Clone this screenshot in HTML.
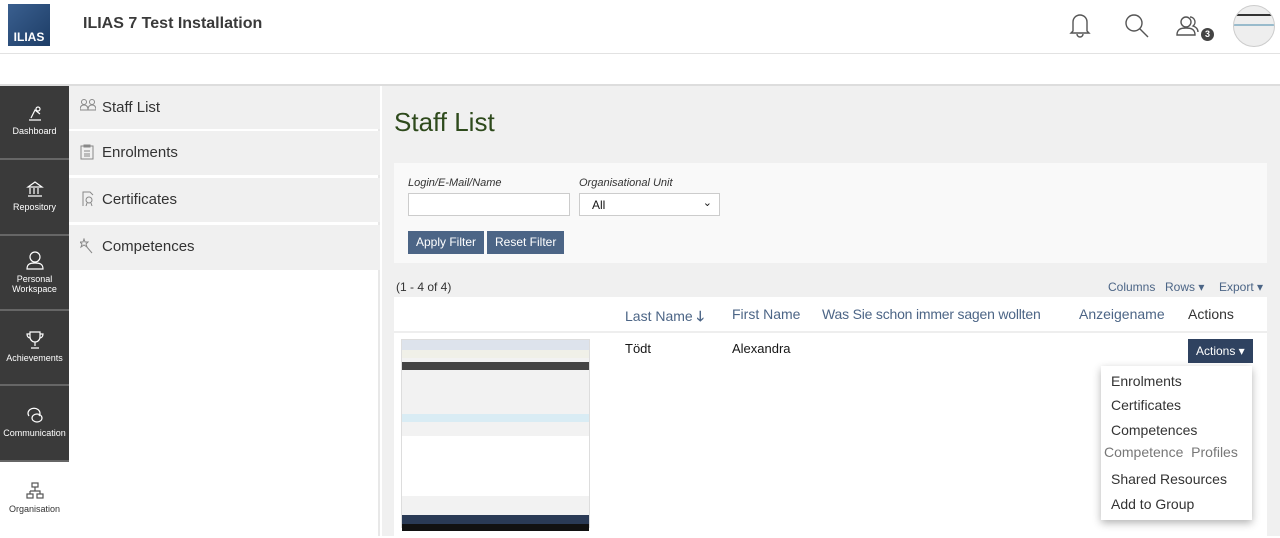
<!DOCTYPE html>
<html><head><meta charset="utf-8"><style>
*{box-sizing:border-box;margin:0;padding:0}
body{width:1280px;height:536px;overflow:hidden;font-family:"Liberation Sans",sans-serif;background:#fff;position:relative;color:#161616}
.abs{position:absolute}
.hdr{left:0;top:0;width:1280px;height:54px;border-bottom:1px solid #e2e2e2;background:#fff}
.logo{left:8px;top:4px;width:42px;height:42px;background:linear-gradient(135deg,#3a5f8f,#1d3d66);color:#fff;font-weight:bold;font-size:12px;padding-top:26px;text-align:center}
.title{left:83px;top:15px;font-size:16px;font-weight:bold;color:#3a3a3a}
.strip{left:0;top:84px;width:1280px;height:2px;background:#ddd}
.mb{left:0;top:86px;width:69px;height:450px;background:#3a3a3a}
.mi{position:absolute;left:0;width:69px;color:#fff;font-size:9px;text-align:center;border-bottom:2px solid #666}
.mi svg{display:block;margin:0 auto 4px}
.slate{left:69px;top:86px;width:311px;height:450px;background:#fff;border-right:2px solid #e8e8e8}
.si{position:absolute;left:0;width:311px;height:43px;background:#f0f0f0;font-size:15px;color:#333;padding:13px 0 0 33px}
.si svg{position:absolute;left:11px;top:13px}
.main{left:382px;top:86px;width:898px;height:450px;background:#f0f0f0}
h1{position:absolute;left:394px;top:107px;font-size:26px;font-weight:normal;color:#2e4a1c}
.filter{left:394px;top:163px;width:873px;height:100px;background:#f9f9f9}
.lbl{font-size:11px;font-style:italic;color:#333}
.btn{background:#4c6586;color:#fff;font-size:12px;height:23px;line-height:23px;padding:0 8px;white-space:nowrap}
.tbl{left:394px;top:297px;width:873px;height:239px;background:#fff}
.th{font-size:14px;color:#4c6586;top:306px;white-space:nowrap}
.lnk{font-size:12px;color:#4c6586;top:280px}
.dd{left:1101px;top:366px;width:151px;height:154px;background:#fff;box-shadow:0 3px 8px rgba(0,0,0,.3);font-size:14px;color:#333}
.dd div{position:absolute;left:10px;white-space:nowrap}
</style></head><body>
<div class="abs hdr"></div>
<div class="abs logo">ILIAS</div>
<div class="abs title">ILIAS 7 Test Installation</div>
<svg class="abs" style="left:1068px;top:12px" width="24" height="26" viewBox="0 0 24 26" fill="none" stroke="#555" stroke-width="1.4"><path d="M5 19V10a7 7 0 0114 0v9l2 2H3z"/><path d="M9 22a3 3 0 006 0"/></svg>
<svg class="abs" style="left:1124px;top:13px" width="26" height="26" fill="none" stroke="#555" stroke-width="1.4"><circle cx="10" cy="10" r="8"/><path d="M16 16l8 8"/></svg>
<svg class="abs" style="left:1176px;top:14px" width="26" height="24" fill="none" stroke="#555" stroke-width="1.4"><circle cx="10" cy="8" r="5"/><path d="M1 21c0-6 4-7 9-7s9 1 9 7z"/><path d="M14 3a5 5 0 013 9c3 1 5 3 5 6"/></svg>
<div class="abs" style="left:1201px;top:28px;width:13px;height:13px;border-radius:50%;background:#444;color:#fff;font-size:9px;font-weight:bold;text-align:center;line-height:13px">3</div>
<div class="abs" style="left:1233px;top:5px;width:42px;height:42px;border-radius:50%;background:#eee;border:1px solid #ccc;overflow:hidden"><div style="margin-top:8px;height:2px;background:#333"></div><div style="margin-top:8px;height:2px;background:#9bc"></div></div>
<div class="abs strip"></div>
<div class="abs mb">
<div class="mi" style="top:0;height:74px;padding-top:18px"><svg width="18" height="18" fill="none" stroke="#fff" stroke-width="1.2"><path d="M3 16h12M5 14l4-8 5 4"/><circle cx="12" cy="5" r="2"/></svg>Dashboard</div>
<div class="mi" style="top:74px;height:76px;padding-top:20px"><svg width="18" height="18" fill="none" stroke="#fff" stroke-width="1.2"><path d="M2 7l7-5 7 5zM4 8v6M8 8v6M12 8v6M2 16h14"/></svg>Repository</div>
<div class="mi" style="top:150px;height:75px;padding-top:14px"><svg width="18" height="20" fill="none" stroke="#fff" stroke-width="1.2"><circle cx="9" cy="7" r="5"/><path d="M1 19c0-5 3-6 8-6s8 1 8 6z"/></svg>Personal<br>Workspace</div>
<div class="mi" style="top:225px;height:75px;padding-top:19px"><svg width="18" height="19" fill="none" stroke="#fff" stroke-width="1.2"><path d="M4 2h10v5a5 5 0 01-10 0zM4 4H1c0 3 2 4 3 4M14 4h3c0 3-2 4-3 4M9 12v4M5 18h8"/></svg>Achievements</div>
<div class="mi" style="top:300px;height:76px;padding-top:20px"><svg width="18" height="18" fill="none" stroke="#fff" stroke-width="1.2"><path d="M3 10a6 5 0 1110 0"/><ellipse cx="11" cy="12" rx="5" ry="4"/></svg>Communication</div>
<div class="mi" style="top:376px;height:76px;padding-top:20px;background:#fff;color:#333;border:none"><svg width="18" height="18" fill="none" stroke="#555" stroke-width="1.2"><rect x="6" y="1" width="6" height="4"/><path d="M9 5v4M4 9h10v3M4 9v3"/><rect x="1" y="12" width="6" height="4"/><rect x="11" y="12" width="6" height="4"/></svg>Organisation</div>
</div>
<div class="abs slate">
<div class="si" style="top:0"><svg width="16" height="12" fill="none" stroke="#888" stroke-width="1"><circle cx="4" cy="3" r="2.5"/><circle cx="12" cy="3" r="2.5"/><path d="M0 11c0-4 2-5 4-5s4 1 4 5zM8 11c0-4 2-5 4-5s4 1 4 5z"/></svg>Staff List</div>
<div class="si" style="top:45px;height:44px"><svg width="14" height="16" fill="none" stroke="#888" stroke-width="1"><rect x="1" y="2" width="12" height="13"/><path d="M4 1h6v2H4zM4 7h6M4 10h6M4 12h6"/></svg>Enrolments</div>
<div class="si" style="top:92px;height:44px"><svg width="14" height="16" fill="none" stroke="#888" stroke-width="1"><path d="M3 15V1h7l3 3"/><circle cx="9" cy="9" r="3"/><path d="M7 12l-1 3M11 12l1 3"/></svg>Certificates</div>
<div class="si" style="top:139px;height:45px"><svg width="14" height="16" fill="none" stroke="#888" stroke-width="1"><path d="M4 1l1 3 3 0-2 2 1 3-3-2-3 2 1-3-2-2 3 0zM6 8l6 7"/></svg>Competences</div>
</div>
<div class="abs main"></div>
<h1>Staff List</h1>
<div class="abs filter"></div>
<div class="abs lbl" style="left:408px;top:177px">Login/E-Mail/Name</div>
<div class="abs" style="left:408px;top:193px;width:162px;height:23px;background:#fff;border:1px solid #ccc"></div>
<div class="abs lbl" style="left:579px;top:177px">Organisational Unit</div>
<div class="abs" style="left:579px;top:193px;width:141px;height:23px;background:#fff;border:1px solid #ccc;font-size:12px;padding:4px 0 0 12px">All<span style="position:absolute;right:7px;top:2px;font-size:11px">&#8964;</span></div>
<div class="abs btn" style="left:408px;top:231px">Apply Filter</div>
<div class="abs btn" style="left:487px;top:231px">Reset Filter</div>
<div class="abs" style="left:396px;top:280px;font-size:12px;color:#333">(1 - 4 of 4)</div>
<div class="abs lnk" style="left:1108px">Columns</div>
<div class="abs lnk" style="left:1165px">Rows ▾</div>
<div class="abs lnk" style="left:1219px">Export ▾</div>
<div class="abs tbl"></div>
<div class="abs" style="left:394px;top:331px;width:873px;height:2px;background:#eee"></div>
<div class="abs th" style="left:625px">Last Name <span style="font-weight:bold">🡓</span></div>
<div class="abs th" style="left:732px">First Name</div>
<div class="abs th" style="left:822px;letter-spacing:-0.2px">Was Sie schon immer sagen wollten</div>
<div class="abs th" style="left:1079px">Anzeigename</div>
<div class="abs th" style="left:1188px;color:#333">Actions</div>
<div class="abs" style="left:401px;top:339px;width:189px;height:189px;background:#f2f2f2;border:1px solid #ddd">
<div style="height:10px;background:#dde3ec"></div><div style="height:8px;background:#f0f0e8"></div><div style="height:8px;background:#444;margin-top:4px"></div>
<div style="height:8px;background:#d9ecf4;margin-top:44px"></div>
<div style="height:60px;background:#fff;margin-top:14px"></div>
<div style="height:9px;background:#2a3a55;margin-top:19px"></div><div style="height:7px;background:#111"></div></div>
<div class="abs" style="left:625px;top:341px;font-size:13px">Tödt</div>
<div class="abs" style="left:732px;top:341px;font-size:13px">Alexandra</div>
<div class="abs btn" style="left:1188px;top:339px;background:#2f4260;height:24px;line-height:24px;font-size:12px">Actions ▾</div>
<div class="abs dd">
<div style="top:7px">Enrolments</div>
<div style="top:31px">Certificates</div>
<div style="top:56px">Competences</div>
<div style="top:78px;left:3px;color:#777">Competence&nbsp;&nbsp;Profiles</div>
<div style="top:105px">Shared Resources</div>
<div style="top:130px">Add to Group</div>
</div>
</body></html>
